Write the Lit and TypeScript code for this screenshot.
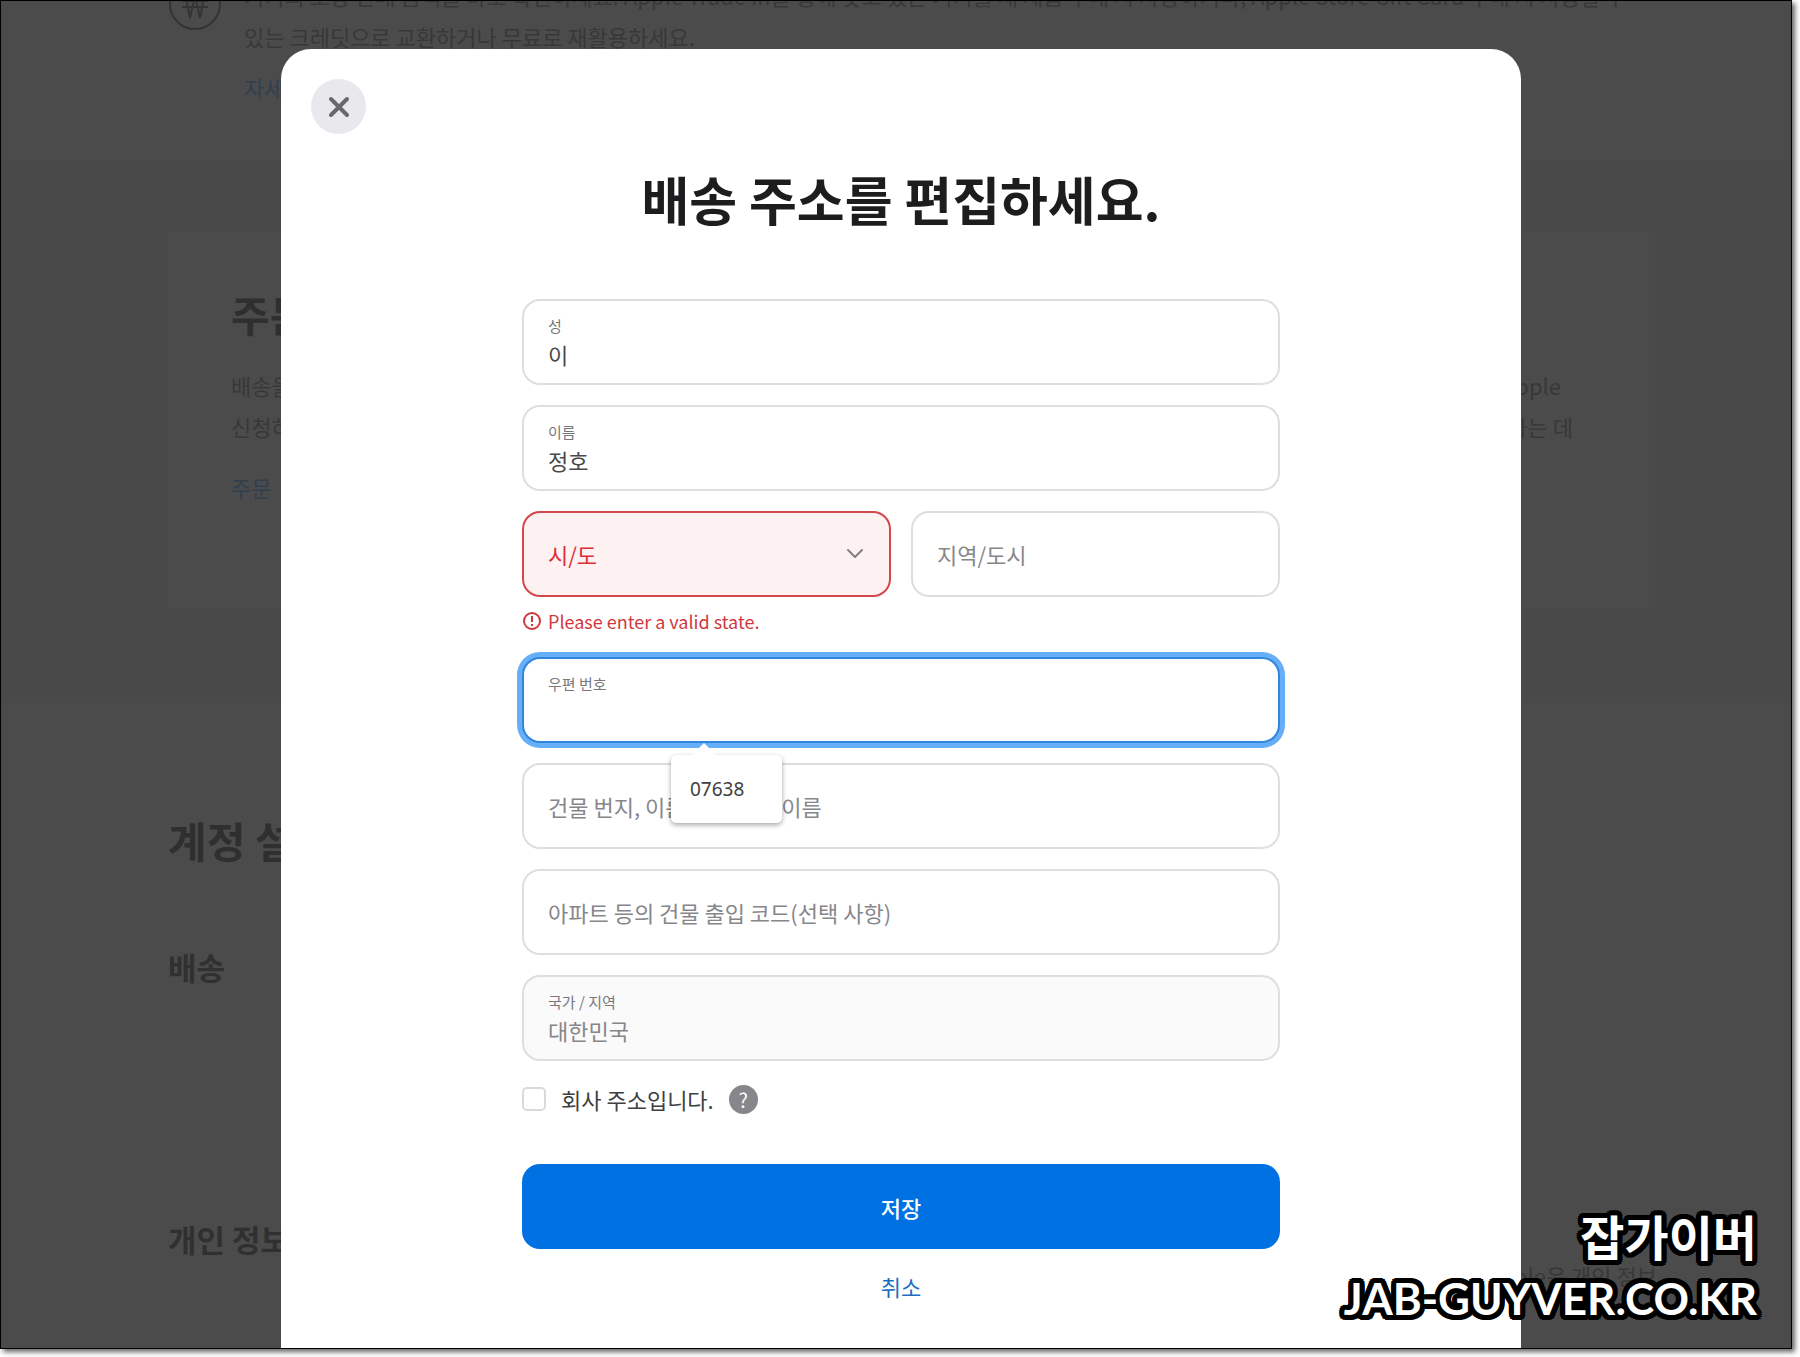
import { LitElement, html, css, nothing } from "lit";
import { customElement, property } from "lit/decorators.js";

const fontStack = css`"Noto Sans CJK KR", "Noto Sans", sans-serif`;

@customElement("text-field")
class TextField extends LitElement {
  @property() name = "";
  @property() label = "";
  @property() value = "";
  @property({ type: Boolean }) raised = false;
  @property({ type: Boolean }) active = false;
  @property({ type: Boolean }) disabled = false;

  static styles = css`
    :host {
      display: block;
      flex: 1;
      min-width: 0;
      font-family: ${fontStack};
    }
    .field {
      display: grid;
      height: 86px;
    }
    .label,
    .input {
      grid-area: 1 / 1;
    }
    .label {
      z-index: 1;
      align-self: center;
      padding-left: 26px;
      font-size: 22px;
      line-height: 32px;
      color: #86868b;
      pointer-events: none;
    }
    .label.raised {
      align-self: start;
      padding-top: 16px;
      font-size: 15px;
      line-height: 22px;
      color: #77777c;
    }
    .input {
      box-sizing: border-box;
      width: 100%;
      height: 100%;
      margin: 0;
      padding: 23px 24px 0;
      border: 2px solid #dededf;
      border-radius: 18px;
      background: #fff;
      color: #494949;
      font-family: inherit;
      font-size: 22px;
      outline: none;
    }
    .input:disabled {
      background: #fafafa;
      color: #86868b;
    }
    .input.active {
      border-color: #2f86dc;
      box-shadow: 0 0 0 5px #66aff8;
    }
  `;

  render() {
    return html`
      <div class="field">
        <label class="label ${this.raised ? "raised" : ""}" for="control">${this.label}</label>
        <input
          id="control"
          class="input ${this.active ? "active" : ""}"
          type="text"
          name=${this.name}
          .value=${this.value}
          ?disabled=${this.disabled}
        />
      </div>
    `;
  }
}

@customElement("state-select")
class StateSelect extends LitElement {
  static styles = css`
    :host {
      display: block;
      flex: 1;
      min-width: 0;
      font-family: ${fontStack};
    }
    .wrap {
      display: grid;
      height: 86px;
    }
    .select,
    .chevron {
      grid-area: 1 / 1;
    }
    .select {
      appearance: none;
      box-sizing: border-box;
      width: 100%;
      height: 100%;
      margin: 0;
      padding: 0 56px 0 24px;
      border: 2px solid #d4474c;
      border-radius: 18px;
      background: #fef1f2;
      color: #dc2f36;
      font-family: inherit;
      font-size: 22px;
    }
    .chevron {
      align-self: center;
      justify-self: end;
      margin-right: 27px;
      pointer-events: none;
    }
  `;

  render() {
    return html`
      <div class="wrap">
        <select class="select" name="state" aria-label="시/도" aria-invalid="true">
          <option>시/도</option>
        </select>
        <svg class="chevron" width="18" height="12" viewBox="0 0 18 12" fill="none" stroke="#808084" stroke-width="2" stroke-linecap="round" stroke-linejoin="round">
          <path d="M2 2l7 7 7-7" />
        </svg>
      </div>
    `;
  }
}

@customElement("account-page")
class AccountPage extends LitElement {
  static styles = css`
    :host {
      display: block;
      overflow: hidden;
      background: #4b4b4b;
      color: #383838;
      font-family: ${fontStack};
      font-size: 22px;
      line-height: 41px;
    }
    .trade {
      display: flex;
      gap: 22px;
      height: 159px;
      box-sizing: border-box;
      padding: 0 142px 0 167px;
      white-space: nowrap;
    }
    .won {
      flex: none;
      margin-top: -24px;
    }
    .copy {
      margin-top: -26px;
    }
    .line {
      margin: 0;
    }
    .link {
      color: #303f50;
      text-decoration: none;
    }
    .copy .link {
      display: block;
      margin-top: 10px;
    }
    .orders {
      padding: 72px 142px 95px 167px;
      background: #494949;
    }
    .card {
      box-sizing: border-box;
      height: 376px;
      padding: 51px 76px 0 63px;
      background: #4b4b4b;
    }
    .heading {
      margin: 0;
      color: #2f2f30;
      font-size: 42px;
      font-weight: 700;
      line-height: 62px;
    }
    .card .heading {
      margin-bottom: 20px;
    }
    .split {
      display: flex;
      justify-content: space-between;
    }
    .split.short {
      padding-right: 12px;
    }
    .card .link {
      display: block;
      margin-top: 20px;
    }
    .settings {
      padding: 106px 134px 0 167px;
    }
    .sub {
      margin: 0;
      color: #303031;
      font-size: 31px;
      font-weight: 700;
      line-height: 46px;
    }
    .shipping {
      margin-top: 73px;
    }
    .privacy {
      margin-top: 226px;
    }
    .note {
      margin: -7px 0 0;
      text-align: right;
    }
  `;

  render() {
    return html`
      <section class="trade">
        <svg class="won" width="54" height="54" viewBox="0 0 54 54" fill="none" stroke="#343434" stroke-width="2">
          <circle cx="27" cy="27" r="25" />
          <path d="M17 16l5 25 5-22 5 22 5-25M14 24h26M14 30h26" stroke-width="2" />
        </svg>
        <div class="copy">
          <p class="line">기기의 보상 판매 금액을 바로 확인하세요. Apple Trade In을 통해 갖고 있는 기기를 새 제품 구매 시 사용하거나, Apple Store Gift Card 구매 시 사용할 수</p>
          <p class="line">있는 크레딧으로 교환하거나 무료로 재활용하세요.</p>
          <a class="link" href="#trade">자세히</a>
        </div>
      </section>
      <section class="orders">
        <div class="card">
          <h2 class="heading">주문</h2>
          <div class="split short"><span>배송을</span><span>Apple</span></div>
          <div class="split"><span>신청하</span><span>하는 데</span></div>
          <a class="link" href="#orders">주문</a>
        </div>
      </section>
      <section class="settings">
        <h2 class="heading">계정 설정</h2>
        <h3 class="sub shipping">배송</h3>
        <h3 class="sub privacy">개인 정보</h3>
        <p class="note">Apple은 개인 정보</p>
      </section>
    `;
  }
}

interface Row {
  name: string;
  label: string;
  value?: string;
  raised?: boolean;
  active?: boolean;
  disabled?: boolean;
  suggestion?: string;
}

const nameRows: Row[] = [
  { name: "last", label: "성", value: "이", raised: true },
  { name: "first", label: "이름", value: "정호", raised: true },
];

const addressRows: Row[] = [
  { name: "zip", label: "우편 번호", raised: true, active: true, suggestion: "07638" },
  { name: "street", label: "건물 번지, 이름 또는 도로 이름" },
  { name: "street2", label: "아파트 등의 건물 출입 코드(선택 사항)" },
  { name: "country", label: "국가 / 지역", value: "대한민국", raised: true, disabled: true },
];

@customElement("app-root")
class AppRoot extends LitElement {
  static styles = css`
    :host {
      display: block;
      box-sizing: border-box;
      min-height: 100vh;
      padding: 0 8px 8px 0;
      background: #fff;
      font-family: ${fontStack};
    }
    .frame {
      position: relative;
      display: grid;
      grid-template-columns: minmax(0, 1fr);
      box-sizing: border-box;
      min-height: calc(100vh - 8px);
      border: 1px solid #000;
      box-shadow: 3px 3px 5px rgba(0, 0, 0, 0.6);
    }
    .page,
    .overlay {
      grid-area: 1 / 1;
    }
    .page {
      height: 0;
      min-height: 100%;
    }
    .overlay {
      z-index: 1;
      display: flex;
      justify-content: center;
      padding: 48px 0 0 10px;
    }
    .modal {
      box-sizing: border-box;
      width: 100%;
      max-width: 1240px;
      padding: 30px 30px 40px;
      border-radius: 30px 30px 0 0;
      background: #fff;
    }
    .close {
      display: grid;
      place-items: center;
      width: 55px;
      height: 55px;
      padding: 0;
      border: 0;
      border-radius: 50%;
      background: #e8e8ed;
    }
    .title {
      margin: 33px 0 68px;
      color: #1d1d1f;
      font-size: 52px;
      font-weight: 700;
      line-height: 64px;
      text-align: center;
    }
    .form {
      display: flex;
      flex-direction: column;
      gap: 20px;
      max-width: 758px;
      margin: 0 auto;
    }
    .region {
      display: flex;
      gap: 20px;
    }
    .error {
      display: flex;
      align-items: center;
      gap: 6px;
      margin: 10px 0 0;
      padding-bottom: 2px;
      color: #d0383e;
      font-size: 18px;
      line-height: 28px;
    }
    .slot {
      position: relative;
    }
    .suggestion {
      position: absolute;
      z-index: 2;
      top: 98px;
      left: 149px;
      box-sizing: border-box;
      width: 111px;
      padding: 21px 19px;
      border: 0;
      border-radius: 5px;
      background: #fff;
      box-shadow: 0 2px 5px rgba(0, 0, 0, 0.35);
      color: #404040;
      font-family: "Noto Sans", sans-serif;
      font-size: 19px;
      line-height: 26px;
      text-align: left;
    }
    .suggestion::before {
      content: "";
      position: absolute;
      top: -12px;
      left: 20px;
      border: 13px solid transparent;
      border-top: 0;
      border-bottom-color: #fff;
    }
    .company {
      display: flex;
      align-items: center;
      height: 36px;
    }
    .check {
      appearance: none;
      width: 24px;
      height: 24px;
      margin: 0 15px 0 0;
      border: 2px solid #dadadc;
      border-radius: 5px;
      background: #fff;
    }
    .company-label {
      margin-right: 15px;
      color: #404042;
      font-size: 22px;
      line-height: 36px;
    }
    .help {
      display: grid;
      place-items: center;
      width: 29px;
      height: 29px;
      padding: 0;
      border: 0;
      border-radius: 50%;
      background: #86868b;
      color: #fff;
      font-family: inherit;
      font-size: 20px;
      line-height: 29px;
    }
    .save {
      height: 85px;
      margin-top: 27px;
      border: 0;
      border-radius: 18px;
      background: #0071e3;
      color: #fff;
      font-family: inherit;
      font-size: 22px;
      font-weight: 500;
    }
    .cancel {
      align-self: center;
      color: #1a6fc0;
      font-size: 22px;
      line-height: 34px;
      text-decoration: none;
    }
    .watermark {
      position: absolute;
      z-index: 3;
      right: 34px;
      bottom: 20px;
      color: #fff;
      font-family: Lato, "Noto Sans CJK KR", sans-serif;
      font-size: 44px;
      font-weight: 700;
      line-height: 60px;
      text-align: right;
      text-shadow:
        5px 0 #000, -5px 0 #000, 0 5px #000, 0 -5px #000,
        4px 4px #000, -4px 4px #000, 4px -4px #000, -4px -4px #000,
        5px 2px #000, -5px 2px #000, 5px -2px #000, -5px -2px #000,
        2px 5px #000, -2px 5px #000, 2px -5px #000, -2px -5px #000,
        2px 2px #000, -2px 2px #000, 2px -2px #000, -2px -2px #000;
    }
    .brand {
      font-size: 48px;
    }
  `;

  private field(row: Row) {
    return html`
      <div class="slot">
        <text-field
          .name=${row.name}
          .label=${row.label}
          .value=${row.value ?? ""}
          .raised=${!!row.raised}
          .active=${!!row.active}
          .disabled=${!!row.disabled}
        ></text-field>
        ${row.suggestion ? html`<button class="suggestion" type="button">${row.suggestion}</button>` : nothing}
      </div>
    `;
  }

  render() {
    return html`
      <div class="frame">
        <account-page class="page"></account-page>
        <div class="overlay">
          <main class="modal" role="dialog" aria-labelledby="title">
            <button class="close" type="button" aria-label="닫기">
              <svg width="22" height="22" viewBox="0 0 22 22" fill="none" stroke="#68686d" stroke-width="4" stroke-linecap="round">
                <path d="M3 3l16 16M19 3L3 19" />
              </svg>
            </button>
            <h1 class="title" id="title">배송 주소를 편집하세요.</h1>
            <form class="form">
              ${nameRows.map((row) => this.field(row))}
              <div>
                <div class="region">
                  <state-select></state-select>
                  <text-field name="city" label="지역/도시"></text-field>
                </div>
                <p class="error">
                  <svg width="20" height="20" viewBox="0 0 20 20" fill="none" stroke="#d0383e" stroke-width="2">
                    <circle cx="10" cy="10" r="8" />
                    <path d="M10 5v6M10 13v2" />
                  </svg>
                  <span>Please enter a valid state.</span>
                </p>
              </div>
              ${addressRows.map((row) => this.field(row))}
              <div class="company">
                <input class="check" id="company" type="checkbox" />
                <label class="company-label" for="company">회사 주소입니다.</label>
                <button class="help" type="button">?</button>
              </div>
              <button class="save" type="button">저장</button>
              <a class="cancel" href="#cancel">취소</a>
            </form>
          </main>
        </div>
        <div class="watermark">
          <div class="brand">잡가이버</div>
          <div>JAB-GUYVER.CO.KR</div>
        </div>
      </div>
    `;
  }
}
